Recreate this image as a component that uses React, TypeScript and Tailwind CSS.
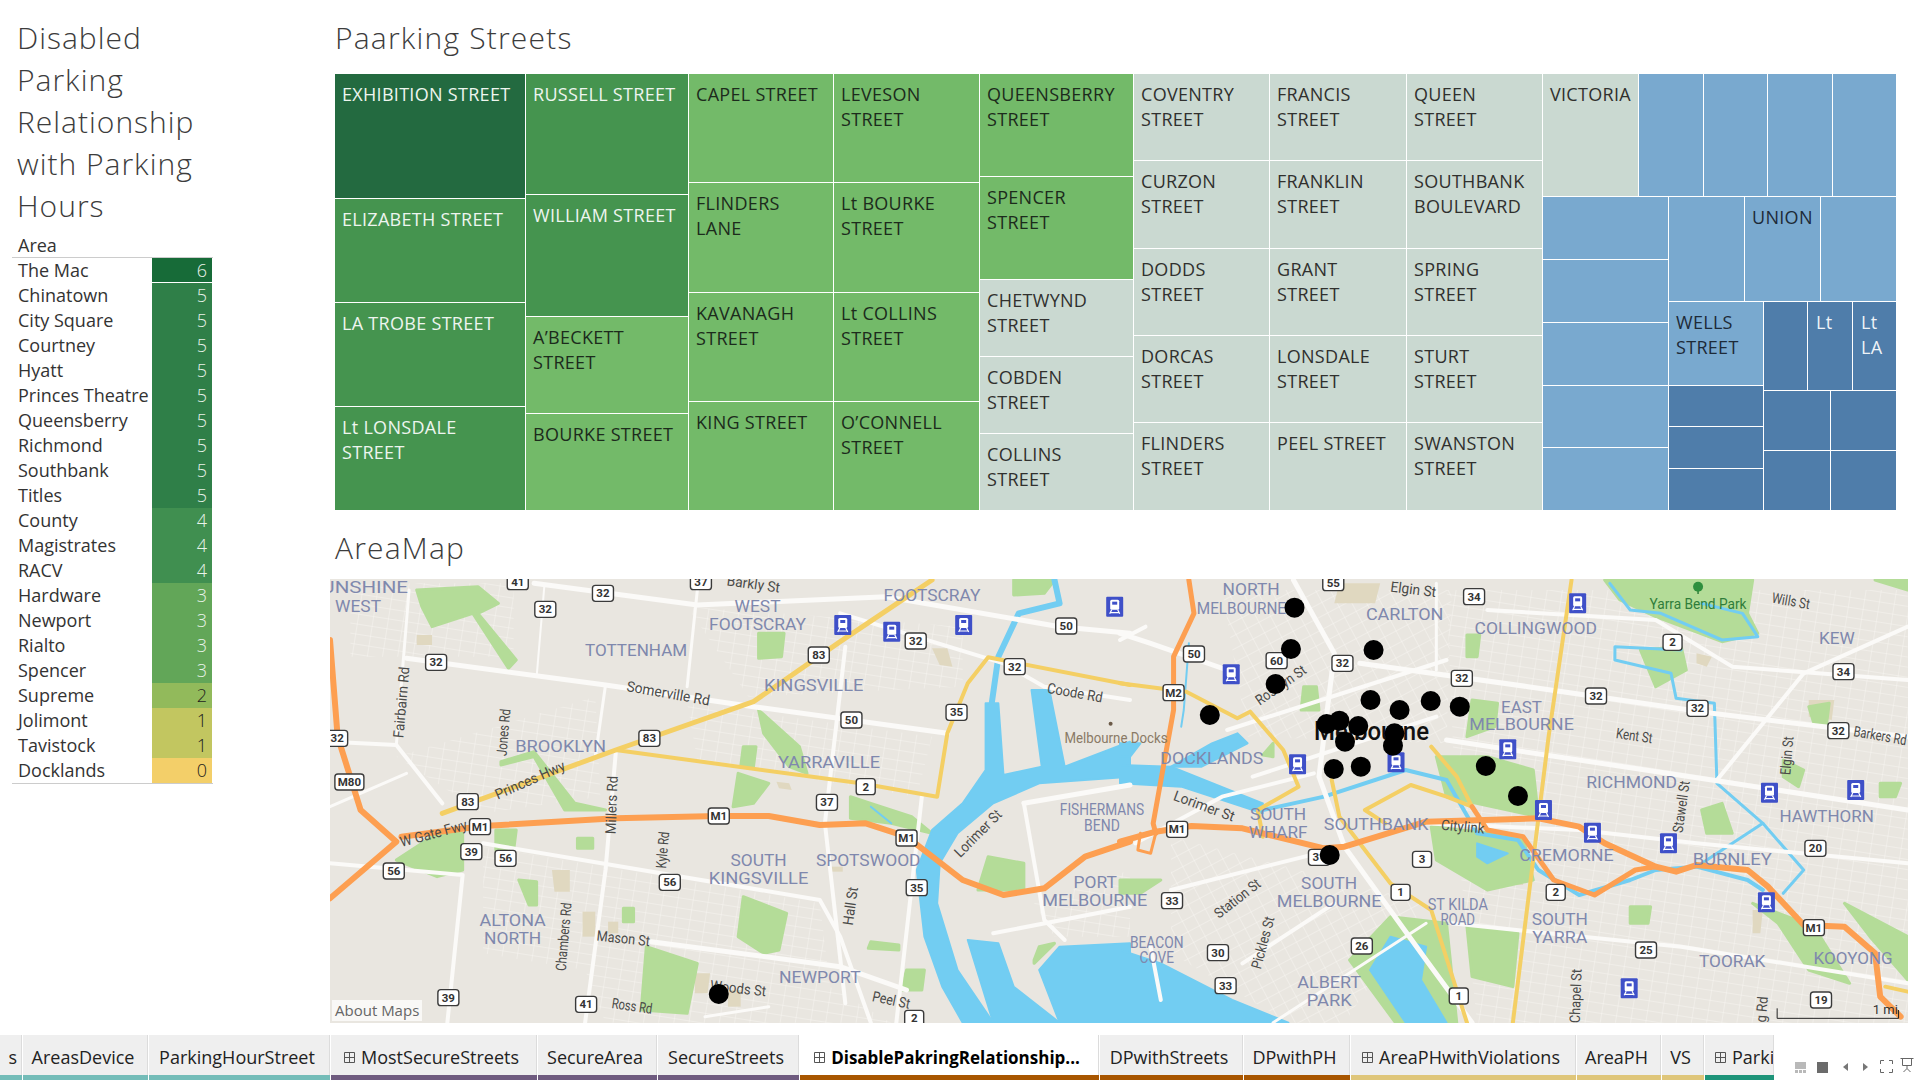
import clsx from "clsx";

const DARK = "bg-[#236a40] text-[#eef5ef] h-[124px]";
const MID = "bg-[#45944f] text-[#eef5ef]";
const LIGHT = "bg-[#73ba69] text-[#1c2b1c]";
const GRAY = "bg-[#cad9d1] text-[#30302e]";
const BLUE = "bg-[#79a9cf] text-[#1d2a38]";
const NAVY = "bg-[#4f7daa] text-[#eef3f8]";

const COLUMNS = [
  {
    w: "w-[190px]",
    cells: [
      { t: "EXHIBITION STREET", c: DARK },
      { t: "ELIZABETH STREET", c: `${MID} h-[103px]` },
      { t: "LA TROBE STREET", c: `${MID} h-[103px]` },
      { t: "Lt LONSDALE STREET", c: `${MID} h-[103px]` },
    ],
  },
  {
    w: "w-[162px]",
    cells: [
      { t: "RUSSELL STREET", c: `${MID} h-[120px]` },
      { t: "WILLIAM STREET", c: `${MID} h-[121px]` },
      { t: "A’BECKETT STREET", c: `${LIGHT} h-[96px]` },
      { t: "BOURKE STREET", c: `${LIGHT} h-[96px]` },
    ],
  },
  {
    w: "w-[144px]",
    cells: [
      { t: "CAPEL STREET", c: `${LIGHT} h-[108px]` },
      { t: "FLINDERS LANE", c: `${LIGHT} h-[109px]` },
      { t: "KAVANAGH STREET", c: `${LIGHT} h-[108px]` },
      { t: "KING STREET", c: `${LIGHT} h-[108px]` },
    ],
  },
  {
    w: "w-[145px]",
    cells: [
      { t: "LEVESON STREET", c: `${LIGHT} h-[108px]` },
      { t: "Lt BOURKE STREET", c: `${LIGHT} h-[109px]` },
      { t: "Lt COLLINS STREET", c: `${LIGHT} h-[108px]` },
      { t: "O’CONNELL STREET", c: `${LIGHT} h-[108px]` },
    ],
  },
  {
    w: "w-[153px]",
    cells: [
      { t: "QUEENSBERRY STREET", c: `${LIGHT} h-[102px]` },
      { t: "SPENCER STREET", c: `${LIGHT} h-[102px]` },
      { t: "CHETWYND STREET", c: `${GRAY} h-[76px]` },
      { t: "COBDEN STREET", c: `${GRAY} h-[76px]` },
      { t: "COLLINS STREET", c: `${GRAY} h-[76px]` },
    ],
  },
  {
    w: "w-[135px]",
    cells: [
      { t: "COVENTRY STREET", c: `${GRAY} h-[86px]` },
      { t: "CURZON STREET", c: `${GRAY} h-[87px]` },
      { t: "DODDS STREET", c: `${GRAY} h-[86px]` },
      { t: "DORCAS STREET", c: `${GRAY} h-[86px]` },
      { t: "FLINDERS STREET", c: `${GRAY} h-[87px]` },
    ],
  },
  {
    w: "w-[136px]",
    cells: [
      { t: "FRANCIS STREET", c: `${GRAY} h-[86px]` },
      { t: "FRANKLIN STREET", c: `${GRAY} h-[87px]` },
      { t: "GRANT STREET", c: `${GRAY} h-[86px]` },
      { t: "LONSDALE STREET", c: `${GRAY} h-[86px]` },
      { t: "PEEL STREET", c: `${GRAY} h-[87px]` },
    ],
  },
  {
    w: "w-[135px]",
    cells: [
      { t: "QUEEN STREET", c: `${GRAY} h-[86px]` },
      { t: "SOUTHBANK BOULEVARD", c: `${GRAY} h-[87px]` },
      { t: "SPRING STREET", c: `${GRAY} h-[86px]` },
      { t: "STURT STREET", c: `${GRAY} h-[86px]` },
      { t: "SWANSTON STREET", c: `${GRAY} h-[87px]` },
    ],
  },
];

const AREAS: [string, number, string][] = [
  ["The Mac", 6, "bg-[#176b38] text-[#e9f3ea] h-[24px]"],
  ["Chinatown", 5, "bg-[#2f7f48] text-[#e9f3ea] h-[25px]"],
  ["City Square", 5, "bg-[#2f7f48] text-[#e9f3ea] h-[25px]"],
  ["Courtney", 5, "bg-[#2f7f48] text-[#e9f3ea] h-[25px]"],
  ["Hyatt", 5, "bg-[#2f7f48] text-[#e9f3ea] h-[25px]"],
  ["Princes Theatre", 5, "bg-[#2f7f48] text-[#e9f3ea] h-[25px]"],
  ["Queensberry", 5, "bg-[#2f7f48] text-[#e9f3ea] h-[25px]"],
  ["Richmond", 5, "bg-[#2f7f48] text-[#e9f3ea] h-[25px]"],
  ["Southbank", 5, "bg-[#2f7f48] text-[#e9f3ea] h-[25px]"],
  ["Titles", 5, "bg-[#2f7f48] text-[#e9f3ea] h-[25px]"],
  ["County", 4, "bg-[#408f50] text-[#e9f3ea] h-[25px]"],
  ["Magistrates", 4, "bg-[#408f50] text-[#e9f3ea] h-[25px]"],
  ["RACV", 4, "bg-[#408f50] text-[#e9f3ea] h-[25px]"],
  ["Hardware", 3, "bg-[#62a658] text-[#e9f3ea] h-[25px]"],
  ["Newport", 3, "bg-[#62a658] text-[#e9f3ea] h-[25px]"],
  ["Rialto", 3, "bg-[#62a658] text-[#e9f3ea] h-[25px]"],
  ["Spencer", 3, "bg-[#62a658] text-[#e9f3ea] h-[25px]"],
  ["Supreme", 2, "bg-[#92ba5b] text-[#1d1d1d] h-[25px]"],
  ["Jolimont", 1, "bg-[#c2c660] text-[#1d1d1d] h-[25px]"],
  ["Tavistock", 1, "bg-[#c2c660] text-[#1d1d1d] h-[25px]"],
  ["Docklands", 0, "bg-[#f3cf69] text-[#1d1d1d] h-[25px]"],
];

const TABS = [
  { t: "s", w: "w-[23px]", bar: "bg-[#74bcb8]", clip: true },
  { t: "AreasDevice", w: "w-[126px]", bar: "bg-[#74bcb8]" },
  { t: "ParkingHourStreet", w: "w-[182px]", bar: "bg-[#74bcb8]" },
  { t: "MostSecureStreets", w: "w-[207px]", bar: "bg-[#6f5b7f]", grid: true },
  { t: "SecureArea", w: "w-[120px]", bar: "bg-[#6f5b7f]" },
  { t: "SecureStreets", w: "w-[142px]", bar: "bg-[#6f5b7f]" },
  { t: "DisablePakringRelationship...", w: "w-[300px]", bar: "bg-[#a85600]", grid: true, active: true },
  { t: "DPwithStreets", w: "w-[144px]", bar: "bg-[#a85600]" },
  { t: "DPwithPH", w: "w-[107px]", bar: "bg-[#a85600]" },
  { t: "AreaPHwithViolations", w: "w-[226px]", bar: "bg-[#dfc67a]", grid: true },
  { t: "AreaPH", w: "w-[85px]", bar: "bg-[#dfc67a]" },
  { t: "VS", w: "w-[43px]", bar: "bg-[#dfc67a]" },
  { t: "Parki", w: "w-[70px]", bar: "bg-[#1e9479]", grid: true, cut: true },
];

// map data is read off two crops: x in crop units (1.96/px), y in crop units (3/px)
const WEST = 330;
const EAST = 1120;
const px = (ox: number, x: number) => ox + x / 1.96;
const py = (y: number) => 570 + y / 3;
const line = (ox: number, s: string) =>
  s
    .split(" ")
    .map((p) => {
      const [x, y] = p.split(",").map(Number);
      return `${px(ox, x)},${py(y)}`;
    })
    .join(" ");

const STREET_AREAS: [number, string, string][] = [
  [WEST, "700,400 1180,500 1150,680 720,570", "url(#streetsA)"],
  [WEST, "300,830 960,1000 980,1250 1100,1358 540,1358 500,1200 300,1150", "url(#streetsA)"],
  [WEST, "700,110 1240,170 1240,350 820,380", "url(#streetsA)"],
  [WEST, "130,560 520,380 530,680 300,730", "url(#streetsA)"],
  [WEST, "40,40 360,40 360,260 40,260", "url(#streetsA)"],
  [WEST, "1380,1000 1568,900 1568,1100 1420,1100", "url(#streetsA)"],
  [EAST, "200,60 650,60 640,520 250,500", "url(#streetsB)"],
  [EAST, "640,60 1544,60 1544,1358 700,1358 660,800", "url(#streetsA)"],
  [EAST, "100,800 600,1000 440,1358 330,1358 100,1150", "url(#streetsB)"],
];

const BLOCKS: [number, string][] = [
  [WEST, "170,195 200,195 200,225 170,225"],
  [WEST, "435,900 470,900 470,965 440,965"],
  [WEST, "495,1025 520,1025 520,1100 495,1100"],
  [WEST, "545,1055 565,1055 565,1090 545,1090"],
  [WEST, "715,1210 745,1210 740,1270 715,1270"],
  [WEST, "780,1260 805,1260 805,1310 780,1310"],
  [WEST, "875,635 900,640 905,660 880,655"],
  [WEST, "980,890 1005,890 1005,905 980,905"],
  [WEST, "1180,235 1210,235 1220,290 1195,285"],
  [EAST, "430,40 510,40 500,100 420,100"],
  [EAST, "1130,250 1160,260 1150,290 1130,280"],
  [EAST, "1350,390 1400,390 1395,450 1350,440"],
  [EAST, "1240,1020 1260,1020 1255,1090 1240,1090"],
  [EAST, "770,900 790,900 790,945 770,945"],
];

const PARKS: [number, string][] = [
  [WEST, "170,60 290,50 330,100 290,130 365,270 350,295 280,130 200,170 180,110"],
  [WEST, "130,870 220,780 260,790 260,900 210,920"],
  [WEST, "620,1130 720,1180 700,1330 610,1320"],
  [WEST, "810,980 895,1030 880,1140 850,1150 800,1100"],
  [WEST, "800,610 860,640 830,700 790,710"],
  [WEST, "810,530 835,530 830,590 805,590"],
  [WEST, "840,190 890,190 885,260 840,265"],
  [WEST, "1020,680 1060,700 1140,740 1180,790 1100,760 1020,745"],
  [WEST, "1290,860 1360,880 1360,960 1270,960"],
  [WEST, "840,420 920,530 935,610 900,590 850,490"],
  [WEST, "325,780 365,780 360,840 325,840"],
  [WEST, "335,575 400,545 480,700 540,720 460,720 400,560 335,585"],
  [WEST, "1130,1200 1165,1200 1160,1260 1120,1260"],
  [WEST, "1380,1180 1420,1120 1390,1130 1380,1170"],
  [WEST, "1340,30 1420,30 1400,70 1340,75"],
  [WEST, "1060,1115 1115,1125 1115,1140 1055,1135"],
  [WEST, "370,930 405,935 405,1005 390,1005"],
  [WEST, "575,1015 595,1015 595,1055 575,1055"],
  [WEST, "485,805 515,805 515,835 485,835"],
  [EAST, "950,30 1240,30 1230,130 1250,190 1180,215 1050,140 980,90"],
  [EAST, "1480,30 1544,30 1544,60"],
  [EAST, "690,390 740,400 735,470 680,500"],
  [EAST, "720,560 810,600 820,740 640,680 620,560"],
  [EAST, "610,770 790,800 810,930 720,960 620,870"],
  [EAST, "450,1170 530,1040 640,1060 660,1358 540,1358"],
  [EAST, "1020,240 1100,230 1110,300 1050,350"],
  [EAST, "1350,410 1390,400 1385,460 1360,460"],
  [EAST, "1240,1000 1360,1070 1430,1240 1350,1200 1290,1060"],
  [EAST, "360,350 385,350 390,420 355,420"],
  [EAST, "680,1070 780,1090 770,1250 690,1220"],
  [EAST, "0,930 80,930 40,970 0,970"],
  [EAST, "1140,720 1180,700 1200,790 1150,790"],
  [EAST, "1300,570 1340,600 1330,650 1300,620"],
  [EAST, "1490,640 1530,640 1520,680 1490,680"],
  [EAST, "1420,1000 1544,1100 1544,1230 1470,1100"],
  [EAST, "680,195 705,195 700,260 680,260"],
  [EAST, "280,555 300,520 300,560"],
  [EAST, "1000,1010 1040,1010 1035,1060 1000,1060"],
];

const WATER_FILL: [number, string][] = [
  [WEST, "1568,515 1440,590 1410,360 1375,360 1395,590 1320,615 1310,400 1285,400 1285,600 1240,700 1180,780 1150,900 1165,1100 1200,1250 1240,1358 1300,1358 1230,1200 1190,1000 1195,880 1230,790 1300,700 1390,640 1568,620"],
  [WEST, "1568,1120 1430,1130 1390,1200 1430,1358 1568,1358"],
  [WEST, "1250,1110 1310,1120 1340,1250 1430,1358 1300,1358"],
  [EAST, "0,520 40,520 20,560 0,560"],
  [EAST, "0,585 100,590 280,700 280,730 120,650 0,640"],
  [EAST, "230,490 250,520 160,590 100,590 180,520"],
  [EAST, "0,1140 80,1180 220,1290 330,1358 0,1358"],
  [EAST, "490,1200 530,1100 600,1130 590,1230 640,1358 560,1358"],
  [EAST, "700,820 760,850 720,880 700,860"],
];

const WATER_LINES: [number, string, number][] = [
  [WEST, "1420,30 1430,100 1350,130 1310,260 1297,400", 6],
  [WEST, "1060,710 1100,760", 2],
  [EAST, "280,720 400,680 560,600 640,630 700,790 780,810 820,900 900,975 1000,930 1050,900 1130,890 1230,930 1260,960", 4],
  [EAST, "1130,890 1260,760 1340,900 1300,970", 3],
  [EAST, "1260,760 1170,640 1165,400 1090,385 1080,310 970,270 970,230 1100,240", 3],
  [EAST, "960,40 1000,120 1060,130 1180,210 1250,200 1220,130 1140,100", 3],
  [EAST, "135,220 125,420 120,470", 2],
];

const WHITE_ROADS: [number, string, number][] = [
  [WEST, "400,40 720,105 1090,80 1430,170 1568,190", 5],
  [WEST, "150,265 540,345 830,410 1210,490", 5],
  [WEST, "0,515 130,525 220,700", 4],
  [WEST, "130,525 155,60", 3],
  [WEST, "420,50 405,320", 2],
  [WEST, "560,550 540,900 500,1358", 4],
  [WEST, "540,345 520,560", 3],
  [WEST, "300,820 960,990 1000,1100 1060,1358", 4],
  [WEST, "0,880 260,915 230,1358", 4],
  [WEST, "630,1115 1000,1190 1130,1260", 5],
  [WEST, "720,60 700,350", 3],
  [WEST, "1010,230 970,760 1010,1300", 4],
  [WEST, "1160,680 1110,1358", 4],
  [WEST, "1000,130 1320,280 1400,350 1568,390", 4],
  [WEST, "1360,700 1400,1050 1440,1110", 4],
  [WEST, "1360,700 1568,645", 5],
  [WEST, "1300,1090 1568,1010", 4],
  [WEST, "0,710 150,610", 3],
  [WEST, "735,1340 860,1310", 3],
  [EAST, "0,190 60,220 210,300", 5],
  [EAST, "340,30 420,250 390,620 440,830 600,1170 690,1358", 5],
  [EAST, "470,280 800,350 1160,430 1544,500", 5],
  [EAST, "640,510 1160,630 1544,720", 5],
  [EAST, "720,120 1050,150 1200,290 1544,330", 4],
  [EAST, "1340,310 1544,170", 4],
  [EAST, "1340,310 1170,630", 4],
  [EAST, "600,760 900,780 1130,820 1544,880", 4],
  [EAST, "650,1060 1100,1130 1544,1240", 4],
  [EAST, "210,480 640,270", 4],
  [EAST, "260,620 620,440", 4],
  [EAST, "30,820 200,680 380,610", 4],
  [EAST, "100,960 440,830", 4],
  [EAST, "80,1290 60,1130", 4],
  [EAST, "240,1180 420,1000", 4],
  [EAST, "0,210 50,170", 4],
  [EAST, "620,40 620,300", 3],
  [EAST, "600,1060 300,1358", 3],
];

const YELLOW_ROADS: [number, string, number][] = [
  [WEST, "220,730 560,540 830,395 1000,215 1180,30", 5],
  [WEST, "560,540 1040,640 1190,680 1210,490 1250,340 1290,262 1568,345", 4],
  [EAST, "0,340 130,365 230,445 255,425 320,540 350,650 270,720 280,800", 4],
  [EAST, "415,630 430,740 530,940 610,1020 680,1358", 4],
  [EAST, "610,530 660,620 690,710 640,680 570,645 480,720 520,760", 4],
  [EAST, "885,30 840,500 770,1358", 4],
  [EAST, "1500,1250 1544,1265", 4],
];

const ORANGE_ROADS: [number, string, number][] = [
  [WEST, "0,210 15,500 60,720 130,815 0,985", 6],
  [WEST, "140,800 300,768 560,745 760,738 860,738 960,765 1050,760 1130,800 1240,930 1320,975 1400,955 1480,860 1568,815", 6],
  [EAST, "135,30 145,130 105,260 105,420 65,760 70,790", 5],
  [EAST, "0,815 70,785 140,768 240,775 400,835 440,830 600,755 820,745 900,770 950,820 1050,890 1090,905 1130,885 1230,900 1270,950 1340,1065 1420,1070 1480,1150 1490,1280 1530,1340", 6],
  [EAST, "690,710 720,780 790,800 850,930 930,975 1010,900 1050,890", 5],
  [EAST, "40,790 35,840 60,850 70,790", 3],
];

const SHIELDS: [number, string, number, number][] = [
  [WEST, "41", 368, 35], [WEST, "32", 535, 70], [WEST, "32", 422, 118], [WEST, "32", 208, 277], [WEST, "37", 727, 35],
  [WEST, "50", 1443, 168], [WEST, "32", 1148, 213], [WEST, "83", 958, 255], [WEST, "32", 1342, 290], [WEST, "35", 1228, 427],
  [WEST, "50", 1022, 450], [WEST, "32", 14, 505], [WEST, "M80", 38, 636], [WEST, "83", 626, 505], [WEST, "83", 270, 695],
  [WEST, "2", 1050, 650], [WEST, "37", 974, 697], [WEST, "M1", 294, 770], [WEST, "M1", 762, 738], [WEST, "M1", 1130, 804],
  [WEST, "39", 277, 845], [WEST, "56", 344, 865], [WEST, "56", 125, 903], [WEST, "56", 666, 937], [WEST, "35", 1150, 953],
  [WEST, "39", 232, 1283], [WEST, "41", 502, 1303], [WEST, "2", 1145, 1345],
  [EAST, "55", 418, 38], [EAST, "34", 694, 80], [EAST, "50", 145, 252], [EAST, "60", 307, 272], [EAST, "32", 436, 280],
  [EAST, "2", 1083, 217], [EAST, "32", 670, 325], [EAST, "34", 1418, 305], [EAST, "M2", 105, 368], [EAST, "32", 933, 378],
  [EAST, "32", 1132, 415], [EAST, "32", 1408, 482], [EAST, "M1", 112, 778], [EAST, "20", 1363, 835], [EAST, "3", 592, 868],
  [EAST, "2", 854, 967], [EAST, "1", 550, 967], [EAST, "M1", 1360, 1073], [EAST, "33", 102, 992], [EAST, "26", 474, 1128],
  [EAST, "25", 1031, 1140], [EAST, "30", 192, 1148], [EAST, "33", 207, 1247], [EAST, "1", 664, 1278], [EAST, "19", 1374, 1290],
  [EAST, "31", 390, 862],
];

const TRAINS: [number, number, number][] = [
  [WEST, 1005, 165], [WEST, 1101, 185], [WEST, 1242, 165], [WEST, 1538, 110],
  [EAST, 218, 313], [EAST, 897, 100], [EAST, 348, 583], [EAST, 760, 538], [EAST, 541, 577], [EAST, 830, 720],
  [EAST, 926, 788], [EAST, 1075, 820], [EAST, 1273, 668], [EAST, 1442, 660], [EAST, 1267, 997], [EAST, 998, 1255],
];

// suburb names: text, centre x, centre y, width (crop units)
const SUBURBS: [number, string, number, number, number][] = [
  [WEST, "UNSHINE", 68, 52, 170], [WEST, "WEST", 55, 107, 90], [WEST, "FOOTSCRAY", 1180, 75, 190], [WEST, "WEST", 838, 108, 90],
  [WEST, "FOOTSCRAY", 838, 163, 190], [WEST, "TOTTENHAM", 600, 240, 200], [WEST, "KINGSVILLE", 948, 346, 195],
  [WEST, "BROOKLYN", 452, 528, 178], [WEST, "YARRAVILLE", 978, 576, 200], [WEST, "SOUTH", 840, 870, 110],
  [WEST, "KINGSVILLE", 840, 923, 195], [WEST, "SPOTSWOOD", 1055, 870, 205], [WEST, "ALTONA", 358, 1050, 130],
  [WEST, "NORTH", 358, 1104, 112], [WEST, "NEWPORT", 960, 1222, 160], [WEST, "PORT", 1500, 937, 85],
  [WEST, "MELBOURNE", 1499, 990, 206], [WEST, "FISHERMANS", 1513, 718, 165], [WEST, "BEND", 1513, 765, 70],
  [EAST, "NORTH", 257, 58, 112], [EAST, "MELBOURNE", 238, 113, 175], [EAST, "CARLTON", 558, 132, 152],
  [EAST, "COLLINGWOOD", 815, 175, 240], [EAST, "KEW", 1405, 205, 70], [EAST, "EAST", 787, 410, 80],
  [EAST, "MELBOURNE", 787, 463, 205], [EAST, "RICHMOND", 1003, 637, 178], [EAST, "HAWTHORN", 1385, 738, 185],
  [EAST, "DOCKLANDS", 180, 565, 202], [EAST, "SOUTH", 310, 733, 110], [EAST, "WHARF", 310, 787, 115],
  [EAST, "SOUTHBANK", 502, 762, 205], [EAST, "CREMORNE", 875, 855, 185], [EAST, "BURNLEY", 1200, 868, 155],
  [EAST, "SOUTH", 410, 938, 110], [EAST, "MELBOURNE", 410, 993, 205], [EAST, "ST KILDA", 662, 1003, 118],
  [EAST, "ROAD", 662, 1048, 68], [EAST, "SOUTH", 862, 1048, 110], [EAST, "YARRA", 862, 1102, 108],
  [EAST, "TOORAK", 1200, 1172, 130], [EAST, "KOOYONG", 1437, 1165, 155], [EAST, "BEACON", 72, 1115, 105],
  [EAST, "COVE", 72, 1160, 68], [EAST, "ALBERT", 410, 1236, 125], [EAST, "PARK", 410, 1290, 88],
];

// road names: text, centre x, centre y, width (crop units), rotation
const ROAD_NAMES: [number, string, number, number, number, number][] = [
  [WEST, "Barkly St", 830, 42, 105, 8], [WEST, "Somerville Rd", 663, 370, 165, 10], [WEST, "Fairbairn Rd", 140, 397, 140, -85],
  [WEST, "Jones Rd", 340, 487, 92, -85], [WEST, "Princes Hwy", 392, 630, 147, -24], [WEST, "W Gate Fwy", 203, 790, 135, -15],
  [WEST, "Millers Rd", 552, 705, 114, -88], [WEST, "Kyle Rd", 652, 840, 72, -85], [WEST, "Chambers Rd", 458, 1100, 134, -85],
  [WEST, "Hall St", 1020, 1008, 75, -82], [WEST, "Mason St", 575, 1105, 105, 6], [WEST, "Ross Rd", 592, 1308, 80, 8],
  [WEST, "Peel St", 1100, 1290, 75, 12], [WEST, "Woods St", 800, 1255, 110, 6], [WEST, "Lorimer St", 1270, 790, 118, -45],
  [WEST, "Coode Rd", 1460, 368, 110, 10],
  [EAST, "Elgin St", 575, 58, 90, 7], [EAST, "Wills St", 1315, 93, 75, 10], [EAST, "Kent St", 1008, 497, 72, 8],
  [EAST, "Barkers Rd", 1490, 497, 105, 10], [EAST, "Rosslyn St", 315, 345, 114, -35], [EAST, "Lorimer St", 165, 708, 125, 20],
  [EAST, "Citylink", 672, 770, 85, 5], [EAST, "Station St", 230, 985, 106, -38], [EAST, "Pickles St", 280, 1118, 105, -75],
  [EAST, "Stawell St", 1100, 710, 102, -82], [EAST, "Elgin St", 1307, 557, 75, -85], [EAST, "Chapel St", 893, 1278, 106, -88],
  [EAST, "g Rd", 1258, 1318, 51, -85],
];

const DOTS: [number, number, number][] = [
  [WEST, 762, 1272],
  ...[
    [342, 113], [335, 237], [497, 240], [305, 342], [176, 435], [491, 390], [548, 420], [609, 393], [666, 410], [405, 462],
    [430, 452], [467, 468], [441, 515], [538, 490], [535, 527], [419, 597], [472, 590], [717, 588], [780, 678], [411, 855],
  ].map(([x, y]) => [EAST, x, y] as [number, number, number]),
];

function Lines({ data, color }: { data: [number, string, number][]; color: string }) {
  return (
    <>
      {data.map(([ox, s, width], i) => (
        <polyline
          key={i}
          points={line(ox, s)}
          fill="none"
          stroke={color}
          strokeWidth={width}
          strokeLinejoin="round"
          strokeLinecap="round"
        />
      ))}
    </>
  );
}

function AreaMap() {
  return (
    <svg viewBox="330 579 1578 444" className="block h-[444px] w-[1578px] font-['Roboto',sans-serif]">
      <defs>
        <pattern id="streetsA" width="15" height="10" patternUnits="userSpaceOnUse" patternTransform="rotate(9)">
          <path d="M0 0H15M0 0V10" stroke="#f7f5f1" strokeWidth="1" fill="none" />
        </pattern>
        <pattern id="streetsB" width="13" height="12" patternUnits="userSpaceOnUse" patternTransform="rotate(-28)">
          <path d="M0 0H13M0 0V12" stroke="#f7f5f1" strokeWidth="1" fill="none" />
        </pattern>
      </defs>
      <rect x="330" y="579" width="1578" height="444" fill="#e9e6e0" />
      {STREET_AREAS.map(([ox, s, fill], i) => (
        <polygon key={i} points={line(ox, s)} fill={fill} />
      ))}
      {BLOCKS.map(([ox, s], i) => (
        <polygon key={i} points={line(ox, s)} fill="#e0d8c0" />
      ))}
      {PARKS.map(([ox, s], i) => (
        <polygon key={i} points={line(ox, s)} fill="#b4dc98" stroke="#b4dc98" strokeWidth="3" strokeLinejoin="round" />
      ))}
      {WATER_FILL.map(([ox, s], i) => (
        <polygon key={i} points={line(ox, s)} fill="#72cdf2" stroke="#72cdf2" strokeWidth="2" strokeLinejoin="round" />
      ))}
      <Lines data={WATER_LINES} color="#72cdf2" />
      <Lines data={WHITE_ROADS} color="#fbfaf8" />
      <Lines data={YELLOW_ROADS} color="#f4cf64" />
      <Lines data={ORANGE_ROADS} color="#fd9f51" />

      {SUBURBS.map(([ox, t, x, y, w], i) => (
        <text
          key={i}
          x={px(ox, x)}
          y={py(y) + 6}
          textAnchor="middle"
          fontSize="16.5"
          fill="#7f88ad"
          textLength={w / 1.96}
          lengthAdjust="spacingAndGlyphs"
        >
          {t}
        </text>
      ))}
      {ROAD_NAMES.map(([ox, t, x, y, w, r], i) => (
        <text
          key={i}
          x={px(ox, x)}
          y={py(y) + 5}
          textAnchor="middle"
          fontSize="14.5"
          fill="#4a4a48"
          textLength={w / 1.96}
          lengthAdjust="spacingAndGlyphs"
          transform={`rotate(${r} ${px(ox, x)} ${py(y)})`}
        >
          {t}
        </text>
      ))}
      <text x="1116" y="743" textAnchor="middle" fontSize="15" fill="#8a7a66" textLength="103" lengthAdjust="spacingAndGlyphs">
        Melbourne Docks
      </text>
      <text x={px(EAST, 1133)} y={py(102) + 5} textAnchor="middle" fontSize="14.5" fill="#2f7d3a" textLength="97" lengthAdjust="spacingAndGlyphs">
        Yarra Bend Park
      </text>
      <path d={`M${px(EAST, 1133)} ${py(72)}v-6`} stroke="#2f7d3a" strokeWidth="1.5" />
      <circle cx={px(EAST, 1133)} cy={py(50)} r="5" fill="#2f8f3e" />
      <circle cx={px(WEST, 1530)} cy={py(461)} r="2" fill="#6b5a48" />

      {SHIELDS.map(([ox, t, x, y], i) => {
        const cx = px(ox, x);
        const cy = py(y);
        const w = t.length > 2 ? 29 : t.length === 1 ? 19 : 21;
        return (
          <g key={i}>
            <rect x={cx - w / 2} y={cy - 8} width={w} height="16" rx="3" fill="#fff" stroke="#3a3a3a" strokeWidth="1.4" />
            <text x={cx} y={cy + 4} textAnchor="middle" fontSize="11.5" fontWeight="700" fill="#333">
              {t}
            </text>
          </g>
        );
      })}

      {TRAINS.map(([ox, x, y], i) => {
        const cx = px(ox, x);
        const cy = py(y);
        return (
          <g key={i}>
            <rect x={cx - 8.5} y={cy - 10} width="17" height="20" rx="1" fill="#3f50c8" />
            <rect x={cx - 4.5} y={cy - 7} width="9" height="10" rx="1.5" fill="#fff" />
            <rect x={cx - 2.5} y={cy - 5} width="5" height="3" fill="#3f50c8" />
            <path d={`M${cx - 3} ${cy + 3}l-2 4M${cx + 3} ${cy + 3}l2 4M${cx - 4} ${cy + 6}h8`} stroke="#fff" strokeWidth="1.2" fill="none" />
          </g>
        );
      })}

      <text x="1314" y="740" fontSize="25" fontWeight="500" fill="#111" textLength="115" lengthAdjust="spacingAndGlyphs">
        Melbourne
      </text>
      {DOTS.map(([ox, x, y], i) => (
        <circle key={i} cx={px(ox, x)} cy={py(y)} r="10" fill="#000" />
      ))}

      <path d={`M${px(EAST, 1288)} ${py(1315)}V${py(1345)}H${px(EAST, 1526)}V${py(1320)}`} fill="none" stroke="#222" strokeWidth="1" />
      <text x={px(EAST, 1500)} y={py(1318) + 5} textAnchor="middle" fontSize="13" fill="#333">
        1 mi
      </text>
    </svg>
  );
}

function Cell({ t, c }: { t: string; c: string }) {
  return <div className={clsx("shrink-0 overflow-hidden pl-[7px] pr-2 pt-2", c)}>{t}</div>;
}

function GridIcon() {
  return (
    <svg width="11" height="11" viewBox="0 0 11 11" className="mr-[6px] shrink-0">
      <path d="M.5.5h10v10H.5zM5.5.5v10M.5 5.5h10" fill="none" stroke="#555" strokeWidth="1" />
    </svg>
  );
}

function TabBar() {
  return (
    <div className="flex h-[45px] shrink-0">
      {TABS.map((tab) => (
        <div key={tab.t} className={clsx("flex h-full shrink-0 flex-col border-r border-white", tab.w)}>
          <div
            className={clsx(
              "flex h-[40px] items-center overflow-hidden whitespace-nowrap border-r border-[#dcdcdc] pt-[5px]",
              tab.active ? "bg-white text-[17px] font-bold text-black" : "bg-[#efefef] text-[18px] text-[#222]",
              tab.clip ? "justify-end pr-[4px]" : tab.cut ? "pl-[10px]" : "justify-center pr-[4px]"
            )}
          >
            {tab.grid && <GridIcon />}
            {tab.t}
          </div>
          <div className={clsx("h-[5px]", tab.bar)} />
        </div>
      ))}
      <div className="flex flex-1 items-end pb-[7px] pl-[20px]">
        <svg width="11" height="11" viewBox="0 0 11 11">
          <path d="M0 0h11v7H0zM0 8h3v3H0zM4 8h3v3H4zM8 8h3v3H8z" fill="#b9b9b9" />
        </svg>
        <svg width="11" height="11" viewBox="0 0 11 11" className="ml-[11px]">
          <rect width="11" height="11" fill="#6b6b6b" />
        </svg>
        <svg width="5" height="8" viewBox="0 0 5 8" className="mb-[2px] ml-[15px]">
          <path d="M5 0v8L0 4z" fill="#777" />
        </svg>
        <svg width="5" height="8" viewBox="0 0 5 8" className="mb-[2px] ml-[15px]">
          <path d="M0 0v8l5-4z" fill="#777" />
        </svg>
        <svg width="13" height="13" viewBox="0 0 13 13" className="ml-[12px]">
          <path d="M.5 4V.5H4M9 .5h3.500V4M12.500 9v3.500H9M4 12.500H.5V9" fill="none" stroke="#666" />
        </svg>
        <svg width="14" height="15" viewBox="0 0 14 15" className="ml-[7px]">
          <path d="M.5.5h13M2.500.5v7h9v-7M7 7.500v3M3.500 14l3.500-3.500 3.500 3.500" fill="none" stroke="#666" />
        </svg>
      </div>
    </div>
  );
}

function BlueTreemap() {
  return (
    <div className="flex w-[353px] flex-col gap-px">
      <div className="flex h-[122px] gap-px">
        <div className={clsx("w-[95px] pl-[7px] pt-2", GRAY)}>VICTORIA</div>
        <div className={clsx("w-[64px]", BLUE)} />
        <div className={clsx("w-[63px]", BLUE)} />
        <div className={clsx("w-[64px]", BLUE)} />
        <div className={clsx("w-[63px]", BLUE)} />
      </div>
      <div className="flex h-[313px] gap-px">
        <div className="flex w-[125px] flex-col gap-px">
          <div className={clsx("h-[62px]", BLUE)} />
          <div className={clsx("h-[62px]", BLUE)} />
          <div className={clsx("h-[62px]", BLUE)} />
          <div className={clsx("h-[61px]", BLUE)} />
          <div className={clsx("h-[62px]", BLUE)} />
        </div>
        <div className="flex w-[227px] flex-col gap-px">
          <div className="flex h-[104px] gap-px">
            <div className={clsx("w-[75px]", BLUE)} />
            <div className={clsx("w-[75px] pl-[7px] pt-2", BLUE)}>UNION</div>
            <div className={clsx("w-[75px]", BLUE)} />
          </div>
          <div className="flex h-[208px] gap-px">
            <div className="flex w-[94px] flex-col gap-px">
              <div className={clsx("h-[83px] pl-[7px] pt-2", BLUE)}>WELLS STREET</div>
              <div className={clsx("h-[40px]", NAVY)} />
              <div className={clsx("h-[41px]", NAVY)} />
              <div className={clsx("h-[41px]", NAVY)} />
            </div>
            <div className="flex w-[132px] flex-col gap-px">
              <div className="flex h-[88px] gap-px">
                <div className={clsx("w-[43px]", NAVY)} />
                <div className={clsx("w-[44px] pl-[8px] pt-2", NAVY)}>Lt</div>
                <div className={clsx("w-[43px] pl-[8px] pt-2", NAVY)}>Lt LA</div>
              </div>
              <div className="flex h-[59px] gap-px">
                <div className={clsx("w-[66px]", NAVY)} />
                <div className={clsx("w-[65px]", NAVY)} />
              </div>
              <div className="flex h-[59px] gap-px">
                <div className={clsx("w-[66px]", NAVY)} />
                <div className={clsx("w-[65px]", NAVY)} />
              </div>
            </div>
          </div>
        </div>
      </div>
    </div>
  );
}

export default function App() {
  return (
    <div className="flex h-[1080px] w-[1920px] flex-col overflow-hidden bg-white font-['Open_Sans',sans-serif]">
      <div className="flex h-[1035px] shrink-0">
        <div className="w-[330px] shrink-0 pt-[17px]">
          <h1 className="pl-[17px] text-[30px] font-light leading-[42px] tracking-[1px] text-[#3c3c3c]">
            Disabled
            <br />
            Parking
            <br />
            Relationship
            <br />
            with Parking
            <br />
            Hours
          </h1>
          <div className="ml-[12px] mt-[3px] w-[201px] text-[18px] text-[#333]">
            <div className="h-[28px] border-b border-[#cccccc] pl-[6px] leading-[30px]">Area</div>
            {AREAS.map(([name, value, cls]) => (
              <div key={name} className="flex">
                <div className="w-[140px] overflow-hidden whitespace-nowrap pl-[6px] leading-[25px]">{name}</div>
                <div className={clsx("w-[60px] pr-[5px] text-right font-light leading-[25px]", cls)}>{value}</div>
              </div>
            ))}
            <div className="border-b border-[#cccccc]" />
          </div>
        </div>

        <div className="flex-1 pl-[5px]">
          <h2 className="h-[74px] pt-[17px] text-[30px] font-light leading-[42px] tracking-[1.2px] text-[#3c3c3c]">
            Paarking Streets
          </h2>
          <div className="flex h-[436px] gap-px text-[18px] leading-[25px] tracking-[0.3px]">
            {COLUMNS.map((col) => (
              <div key={col.w + col.cells[0].t} className={clsx("flex flex-col gap-px", col.w)}>
                {col.cells.map((cell) => (
                  <Cell key={cell.t} {...cell} />
                ))}
              </div>
            ))}
            <BlueTreemap />
          </div>
          <h2 className="h-[69px] pt-[17px] text-[30px] font-light leading-[42px] tracking-[1.2px] text-[#3c3c3c]">
            AreaMap
          </h2>
          <div className="relative -ml-[5px] h-[444px] w-[1578px]">
            <AreaMap />
            <div className="absolute bottom-[2px] left-[2px] bg-white/70 px-[3px] text-[15px] leading-[21px] text-[#666]">
              About Maps
            </div>
          </div>
        </div>
      </div>
      <TabBar />
    </div>
  );
}
